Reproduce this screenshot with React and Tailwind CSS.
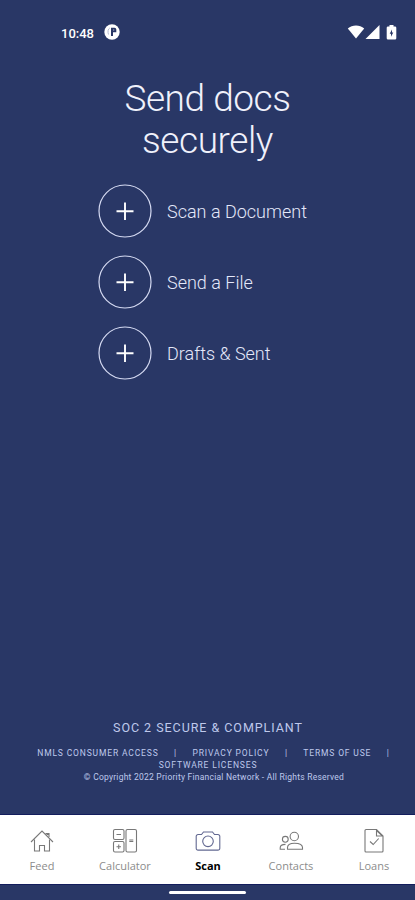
const Ic = {
  Feed: () => (
    <svg width="24" height="24" viewBox="0 0 24 24" fill="none" stroke="currentColor" strokeWidth="1.100">
      <path d="M1 13L12 2l11 11" />
      <path d="M4.500 10.500v11.500h5v-5.500h5V22h5V10.500" />
      <path d="M15.500 4.500h3.500V8M16.500 5.500H19" />
    </svg>
  ),
  Calculator: () => (
    <svg width="26" height="26" viewBox="0 0 26 26" fill="none" stroke="currentColor" strokeWidth="1.100">
      <rect x="1.500" y="1.500" width="10.500" height="10" rx="1.500" />
      <rect x="1.500" y="13.500" width="10.500" height="10.500" rx="1.500" />
      <rect x="14" y="1.500" width="10.500" height="22.500" rx="1.500" />
      <path d="M4.500 6.500h4.500M4.500 18.800h4.500M6.750 16.500v4.500M17.300 12h4M17.300 13.500h4" />
    </svg>
  ),
  Scan: () => (
    <svg width="26" height="24" viewBox="0 0 26 24" fill="none" stroke="currentColor" strokeWidth="1.100">
      <path d="M3 5.500h3.500L8.500 3h9l2 2.500H23A1.800 1.800 0 0 1 24.800 7.300v12A1.800 1.800 0 0 1 23 21.100H3a1.800 1.800 0 0 1-1.800-1.800v-12A1.800 1.800 0 0 1 3 5.500z" />
      <circle cx="13" cy="12.300" r="5.300" />
    </svg>
  ),
  Contacts: () => (
    <svg width="26" height="24" viewBox="0 0 26 24" fill="none" stroke="currentColor" strokeWidth="1.100">
      <circle cx="16.300" cy="7.500" r="4.200" />
      <path d="M9.500 20.300v-1.700c0-2.800 2.500-4.400 7-4.400s8 1.600 8 4.400v1.700z" />
      <circle cx="7.300" cy="10.300" r="2.900" />
      <path d="M7 20.300H2.200v-1.500c0-2.200 2-3.400 5.300-3.400" />
    </svg>
  ),
  Loans: () => (
    <svg width="22" height="26" viewBox="0 0 22 26" fill="none" stroke="currentColor" strokeWidth="1.100">
      <path d="M13.500 1.500H3a1 1 0 0 0-1 1v20.500a1 1 0 0 0 1 1h16a1 1 0 0 0 1-1V8z" />
      <path d="M13.500 1.500V8H20M13.500 2.500L19 7.500" />
      <path d="M7 13.500l3.200 3 5.500-6" />
    </svg>
  ),
};

const ACTIONS = ["Scan a Document", "Send a File", "Drafts & Sent"];

const TABS = [
  { key: "feed", label: "Feed", Icon: Ic.Feed },
  { key: "calculator", label: "Calculator", Icon: Ic.Calculator },
  { key: "scan", label: "Scan", Icon: Ic.Scan },
  { key: "contacts", label: "Contacts", Icon: Ic.Contacts },
  { key: "loans", label: "Loans", Icon: Ic.Loans },
];

const StatusBar = () => (
  <div className="flex h-16 items-center pl-[61px] pr-[18px] text-white">
    <span className="mt-[2px] text-[13px] font-medium leading-none">10:48</span>
    <svg className="ml-[10px]" width="16" height="16" viewBox="0 0 16 16">
      <circle cx="8" cy="8" r="7.700" fill="#fff" />
      <path d="M5.800 4C4 5 3.500 7.500 4.500 10.500" fill="none" stroke="#b4bad2" strokeWidth="1" />
      <path d="M7 3.700h3.500a1.800 1.800 0 0 1 1.800 1.800v2.800H9V12H7z" fill="#293766" />
      <path d="M9 5.200h1.300v1.500H9z" fill="#8790b0" />
    </svg>
    <div className="ml-auto flex items-center">
      <svg width="18" height="14" viewBox="0 0 18 14" fill="currentColor">
        <path d="M9 13.500L.8 3.600C3 1.600 6 .6 9 .6s6 1 8.200 3z" />
      </svg>
      <svg width="15" height="14" viewBox="0 0 15 14" fill="currentColor">
        <path d="M14.500 0v14H.5z" />
      </svg>
      <svg className="ml-[6px]" width="11" height="15" viewBox="0 0 11 15">
        <path d="M3.500 0h4v1.500H9a1.300 1.300 0 0 1 1.300 1.300v10.400A1.300 1.300 0 0 1 9 14.500H2A1.300 1.300 0 0 1 .7 13.200V2.800A1.300 1.300 0 0 1 2 1.500h1.500z" fill="#fff" />
        <path d="M6 4.500L3.700 8.700H5v3l2.300-4.200H6z" fill="#293766" />
      </svg>
    </div>
  </div>
);

const App = () => (
  <div className="flex h-[900px] w-full flex-col bg-[#293766] font-['Roboto',sans-serif]">
    <StatusBar />

    <main className="flex flex-1 flex-col">
      <h1 className="mt-[14px] text-center text-[37px] font-light leading-[42px] tracking-[-0.450px] text-[#f0f1fb]">
        Send docs
        <br />
        securely
      </h1>

      <div className="mt-[22px] ml-[98px] flex flex-col gap-[17px]">
        {ACTIONS.map((label) => (
          <button key={label} className="flex h-[54px] items-center gap-[15px] text-left">
            <svg width="54" height="54" viewBox="0 0 54 54" fill="none" stroke="#d5daf2">
              <circle cx="27" cy="27" r="26" strokeWidth="1.200" />
              <path d="M18.500 27.300h17M27 18.500v17.500" stroke="#fff" strokeWidth="1.900" />
            </svg>
            <span className="pt-[2px] text-[18px] font-light leading-6 text-[#e4e8fa]">{label}</span>
          </button>
        ))}
      </div>

      <footer className="mt-auto pb-[31px] text-center text-[#bfc9ec]">
        <p className="pl-px text-[12.500px] leading-4 tracking-[0.950px]">SOC 2 SECURE &amp; COMPLIANT</p>
        <div className="mt-[11px] flex justify-center pl-[12px] text-[8.500px] leading-3 tracking-[0.850px] whitespace-nowrap">
          <span>NMLS CONSUMER ACCESS</span>
          <span className="mx-[15.500px]">|</span>
          <span>PRIVACY POLICY</span>
          <span className="mx-[15.500px]">|</span>
          <span>TERMS OF USE</span>
          <span className="ml-[15.500px]">|</span>
        </div>
        <p className="pl-px text-[8.500px] leading-3 tracking-[0.850px]">SOFTWARE LICENSES</p>
        <p className="pl-[13px] text-[8.500px] leading-3 tracking-[0.240px]">
          © Copyright 2022 Priority Financial Network - All Rights Reserved
        </p>
      </footer>
    </main>

    <nav className="grid h-[71px] grid-cols-5 border-y border-[#131d5c] bg-white font-['Open_Sans',sans-serif]">
      {TABS.map(({ key, label, Icon }) => (
        <button key={key} className="flex flex-col items-center pt-[13px]">
          <span className={`flex h-[26px] items-center ${key === "scan" ? "text-[#626891]" : "text-[#787878]"}`}>
            <Icon />
          </span>
          <span className={`mt-[4px] pl-px text-[11px] leading-4 ${key === "scan" ? "font-bold text-black" : "text-[#8c8c8c]"}`}>
            {label}
          </span>
        </button>
      ))}
    </nav>

    <div className="flex h-[15px] justify-center pt-[6px]">
      <div className="h-[3px] w-[77px] rounded-full bg-white" />
    </div>
  </div>
);

export default App;
